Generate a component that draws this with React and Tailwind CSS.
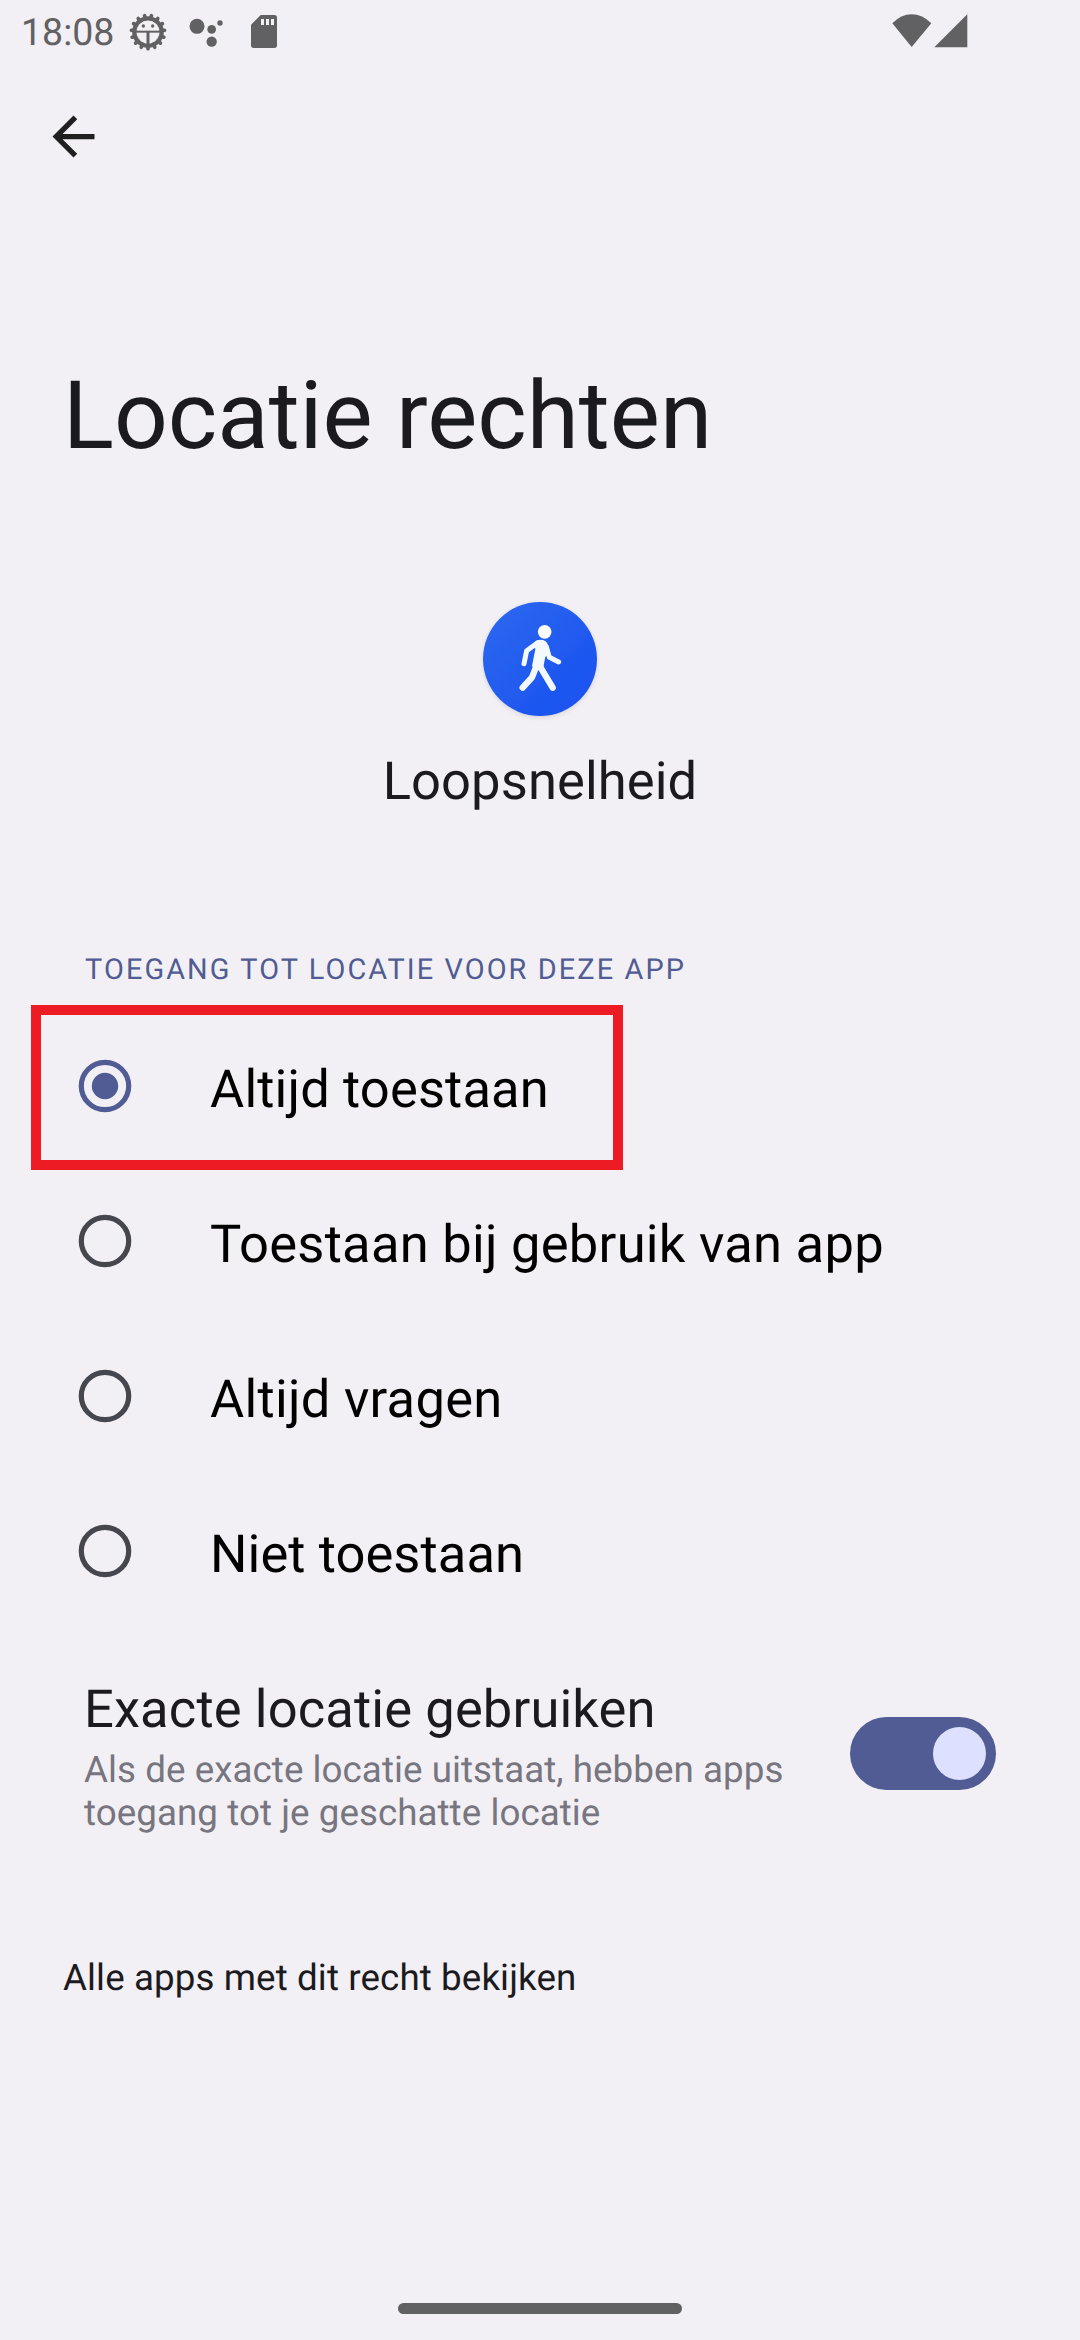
const teeth = Array.from({ length: 15 }, (_, i) => i * 24);

const options = [
  { label: "Altijd toestaan", selected: true, tracking: "tracking-[0.13px]" },
  { label: "Toestaan bij gebruik van app", selected: false, tracking: "tracking-[0.25px]" },
  { label: "Altijd vragen", selected: false, tracking: "tracking-[0.25px]" },
  { label: "Niet toestaan", selected: false, tracking: "tracking-[0.08px]" },
];

function GearIcon() {
  return (
    <svg className="size-[38px]" viewBox="-57 -57 114 114" fill="none" stroke="#616163">
      {teeth.map((angle) => (
        <path key={angle} d="M0 40V50" strokeWidth="11" strokeLinecap="round" transform={`rotate(${angle})`} />
      ))}
      <circle r="41" strokeWidth="13" />
      <path d="M-38 -1H38" strokeWidth="6" />
      <path d="M0 0V38" strokeWidth="9" />
      <circle cx="-14" cy="-18" r="5" fill="#616163" stroke="none" />
      <circle cx="14" cy="-18" r="5" fill="#616163" stroke="none" />
    </svg>
  );
}

function DotsIcon() {
  return (
    <svg className="ml-[22px] mt-px h-[32px] w-[34px]" viewBox="567 50 102 96" fill="#616163">
      <circle cx="591" cy="78" r="22.5" />
      <circle cx="635" cy="87" r="13" />
      <circle cx="660" cy="68" r="8" />
      <circle cx="635" cy="124" r="15.5" />
    </svg>
  );
}

function SdCardIcon() {
  return (
    <svg className="mb-px ml-[28px] h-[33px] w-[26px]" viewBox="753 45 78 99">
      <path
        fill="#616163"
        d="M782 45H823Q831 45 831 53V136Q831 144 823 144H761Q753 144 753 136V74Z"
      />
      <path fill="#f2f0f4" d="M783 57h9v18h-9zM798 57h9v18h-9zM813 57h9v18h-9z" />
    </svg>
  );
}

function StatusBar() {
  return (
    <div className="flex h-[64px] shrink-0 items-center pl-[21px] pr-[112px]">
      <span className="w-[108px] pt-[2px] text-[37.5px] leading-[44px] text-[#616163]">18:08</span>
      <GearIcon />
      <DotsIcon />
      <SdCardIcon />
      <svg className="mb-[3px] ml-auto h-[34px] w-[76px]" viewBox="95 41 228 102" fill="#616163">
        <path d="M154 140L96 69Q122 42 154 42T213 69Z" />
        <path d="M321 42V141H222Z" />
      </svg>
    </div>
  );
}

function AppIcon() {
  return (
    <svg className="size-[130px]" viewBox="345 42 390 390" fill="none">
      <defs>
        <linearGradient id="appBlue" x1="0" y1="0" x2="1" y2="1">
          <stop offset="0.15" stopColor="#2a65ef" />
          <stop offset="0.85" stopColor="#1a53f0" />
        </linearGradient>
        <filter id="iconShadow" x="-20%" y="-20%" width="140%" height="140%">
          <feDropShadow dx="0" dy="4" stdDeviation="7" floodColor="#000000" floodOpacity="0.12" />
        </filter>
      </defs>
      <circle cx="540" cy="237" r="171" fill="url(#appBlue)" filter="url(#iconShadow)" />
      <circle cx="554" cy="155.500" r="20.500" fill="#fff" />
      <g stroke="#f3f9ff" strokeLinecap="round" strokeLinejoin="round">
        <path strokeWidth="15" d="M532 189L500 212L492 251M559 200L568 232L596 246" />
        <path strokeWidth="19" d="M538 256L578 323M530 256L516 292L488 323" />
      </g>
      <path
        fill="#f3f9ff"
        d="M522 188Q530 179 540 179Q560 179 563 194L568 222L556 230L550 262L522 264L516 258L526 208Z"
      />
    </svg>
  );
}

function Radio({ selected }) {
  const color = selected ? "#505c93" : "#46464f";
  return (
    <svg className="size-[54px]" viewBox="-27 -27 54 54">
      <circle r="23.700" fill="none" stroke={color} strokeWidth="5.200" />
      {selected && <circle r="13.200" fill={color} />}
    </svg>
  );
}

export default function App() {
  return (
    <div className="flex h-[2340px] w-[1080px] flex-col overflow-hidden bg-[#f2f0f4] font-['Roboto',sans-serif] text-[#1b1b1f] [text-rendering:geometricPrecision]">
      <StatusBar />
      <header className="flex h-[145px] shrink-0 items-center px-[42px]">
        <svg className="size-[63px]" viewBox="0 0 24 24" fill="#1f1f1f">
          <path d="M20 11H7.830l5.590-5.590L12 4l-8 8 8 8 1.410-1.410L7.830 13H20v-2z" />
        </svg>
      </header>
      <h1 className="mt-[153px] shrink-0 pl-[63px] text-[94.5px] leading-[110px]">Locatie rechten</h1>

      <section className="mt-[122px] flex shrink-0 flex-col items-center">
        <AppIcon />
        <div className="mt-[26px] text-[52.5px] leading-[62px] tracking-[0.1px]">Loopsnelheid</div>
      </section>

      <h2 className="mt-[141px] shrink-0 pl-[85px] text-[28.875px] leading-[34px] tracking-[2.1px] text-[#505c93]">
        TOEGANG TOT LOCATIE VOOR DEZE APP
      </h2>

      <ul className="relative mt-[21px] shrink-0 text-black">
        {options.map((option) => (
          <li key={option.label} className="flex h-[155px] items-center pl-[78px]">
            <Radio selected={option.selected} />
            <span className={`ml-[78px] pt-[6px] text-[52.5px] leading-[62px] ${option.tracking}`}>
              {option.label}
            </span>
          </li>
        ))}
        <li className="pointer-events-none absolute left-[31px] top-[-3px] h-[165px] w-[592px] border-10 border-[#ed1c24]" />
      </ul>

      <section className="mt-[50px] flex shrink-0 items-start justify-between px-[84px]">
        <div>
          <div className="text-[52.5px] leading-[62px] tracking-[0.12px]">Exacte locatie gebruiken</div>
          <p className="mt-[8px] text-[36.75px] leading-[43px] tracking-[0.05px] text-[#777680]">
            Als de exacte locatie uitstaat, hebben apps
            <br />
            toegang tot je geschatte locatie
          </p>
        </div>
        <div className="mt-[39px] flex h-[73px] w-[146px] items-center justify-end rounded-full bg-[#505c93] pr-[10px]">
          <div className="size-[53px] rounded-full bg-[#dde0ff]" />
        </div>
      </section>

      <p className="mt-[122px] shrink-0 pl-[63px] text-[36.75px] leading-[43px] tracking-[0.1px]">
        Alle apps met dit recht bekijken
      </p>

      <div className="mb-[26px] mt-auto h-[11px] w-[284px] shrink-0 self-center rounded-full bg-[#616163]" />
    </div>
  );
}
